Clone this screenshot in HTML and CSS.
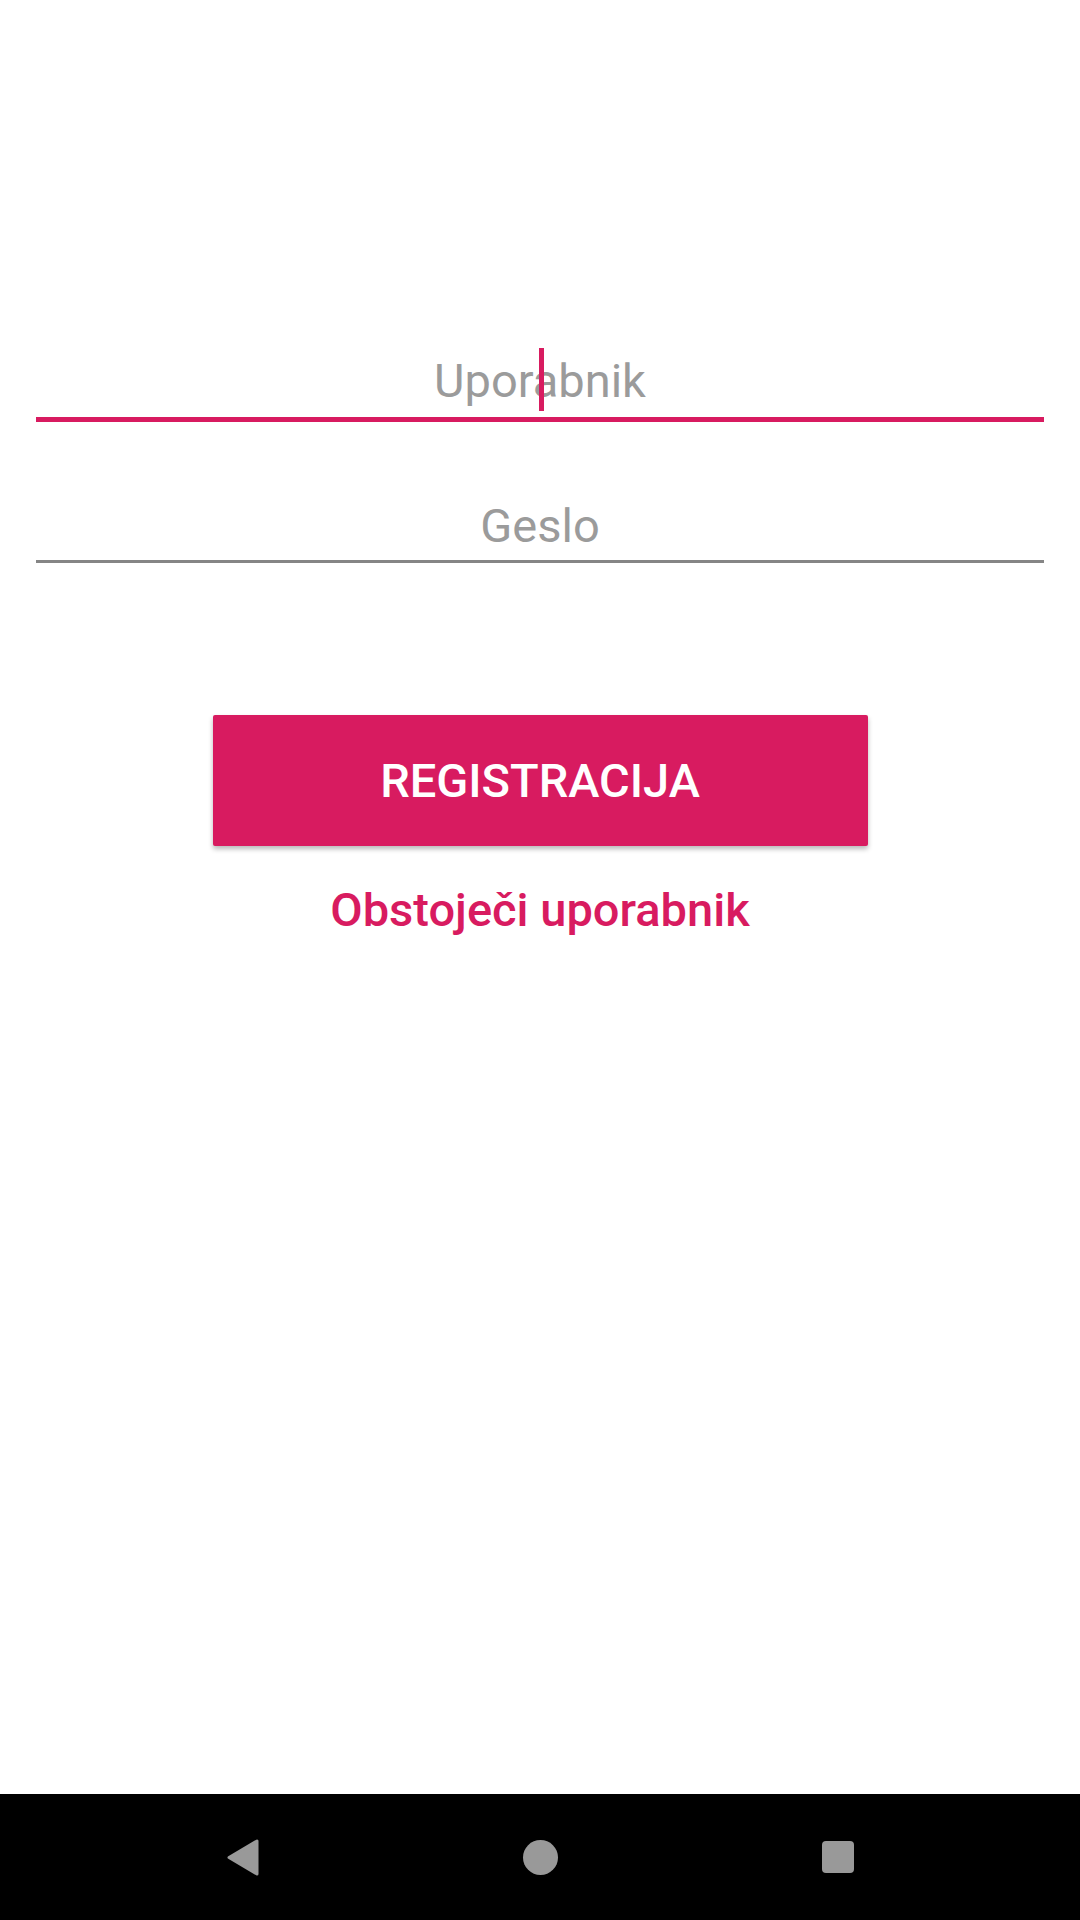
FILE: index.html
```html
<!DOCTYPE html>
<html lang="sl">
<head>
<meta charset="utf-8">
<title>Registracija</title>
<link rel="stylesheet" href="styles.css">
</head>
<body>
<div class="screen">
  <main class="content">
    <div class="field field-focused">
      <span class="hint">Uporabnik</span>
      <span class="cursor"></span>
    </div>
    <div class="field field-idle">
      <span class="hint">Geslo</span>
    </div>
    <button class="btn-primary">REGISTRACIJA</button>
    <a class="link">Obstoječi uporabnik</a>
  </main>
  <nav class="navbar">
    <div class="nav-slot">
      <svg class="nav-back" width="34" height="39" viewBox="0 0 34 39">
        <polygon points="3,19.5 31,3 31,36" fill="#999" stroke="#999" stroke-width="3" stroke-linejoin="round"/>
      </svg>
    </div>
    <div class="nav-slot">
      <span class="nav-home"></span>
    </div>
    <div class="nav-slot">
      <span class="nav-recent"></span>
    </div>
  </nav>
</div>
</body>
</html>
```

FILE: styles.css
```css
html, body {
  margin: 0;
  padding: 0;
  background: #ffffff;
}

.screen {
  width: 1080px;
  height: 1920px;
  display: flex;
  flex-direction: column;
  font-family: Roboto, "Noto Sans", "Liberation Sans", sans-serif;
}

.content {
  flex: 1;
  display: flex;
  flex-direction: column;
  align-items: center;
  padding-top: 353px;
  box-sizing: border-box;
}

.field {
  position: relative;
  align-self: stretch;
  margin: 0 36px;
  font-size: 47px;
  line-height: 56px;
  text-align: center;
  color: #9b9b9b;
}

.field-focused {
  padding-bottom: 8px;
  border-bottom: 5px solid #d81b60;
}

.field-idle {
  margin-top: 76px;
  padding-bottom: 6px;
  border-bottom: 3px solid #858585;
}

.cursor {
  position: absolute;
  left: 503px;
  top: -5px;
  width: 5px;
  height: 63px;
  background: #d81b60;
}

.btn-primary {
  margin-top: 152px;
  width: 655px;
  height: 131px;
  border: none;
  border-radius: 2px;
  background: #d81b60;
  color: #ffffff;
  font-family: Roboto, "Noto Sans", "Liberation Sans", sans-serif;
  font-weight: 500;
  font-size: 47px;
  display: flex;
  align-items: center;
  justify-content: center;
  padding: 0;
  box-shadow: 0 3px 5px rgba(0, 0, 0, 0.28);
}

.link {
  margin-top: 36px;
  font-size: 47px;
  line-height: 56px;
  font-weight: 500;
  color: #d81b60;
}

.navbar {
  height: 126px;
  background: #000000;
  display: flex;
  justify-content: center;
  align-items: center;
  gap: 198px;
}

.nav-slot {
  width: 100px;
  height: 40px;
  display: flex;
  align-items: center;
  justify-content: center;
}

.nav-back {
  display: block;
  margin-left: 1px;
}

.nav-home {
  width: 35px;
  height: 35px;
  border-radius: 50%;
  background: #999999;
}

.nav-recent {
  width: 32px;
  height: 32px;
  border-radius: 4px;
  background: #999999;
}
```
